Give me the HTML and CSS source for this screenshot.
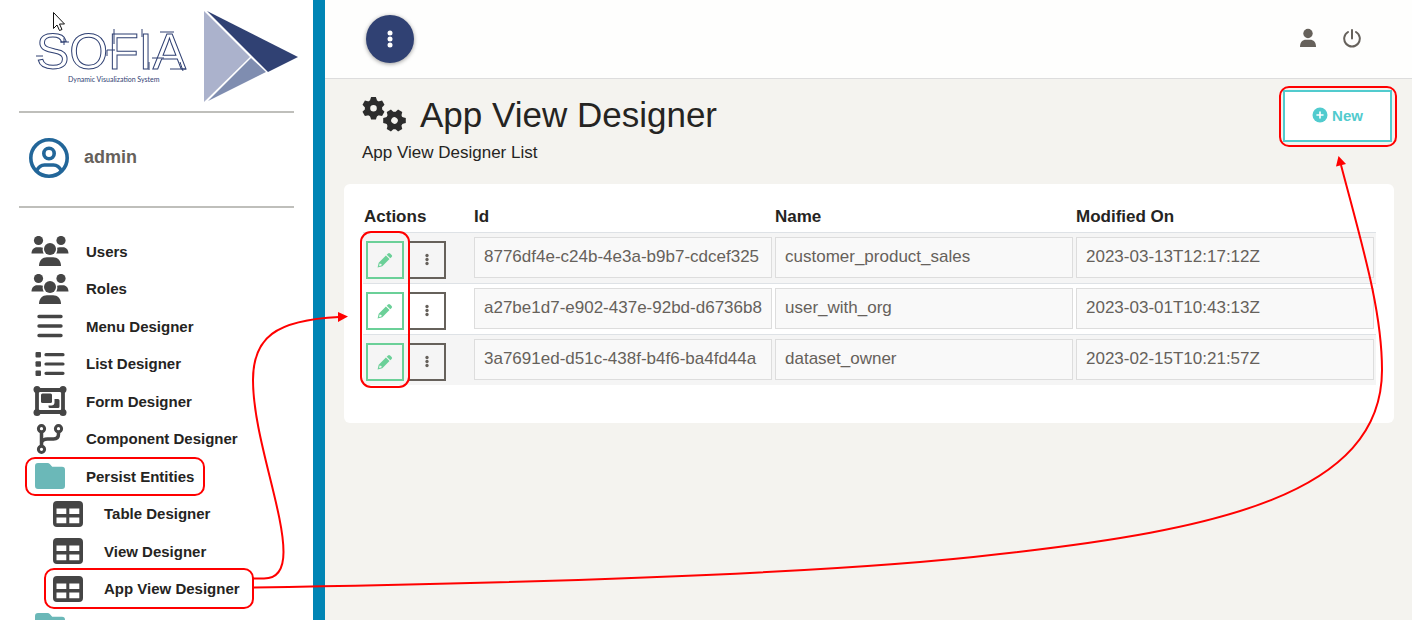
FILE: index.html
```html
<!DOCTYPE html>
<html lang="en">
<head>
<meta charset="utf-8">
<title>App View Designer</title>
<link rel="stylesheet" href="styles.css">
</head>
<body>
<svg class="sprite" aria-hidden="true">
  <symbol id="i-users" viewBox="0 0 38 30">
    <circle cx="7.500" cy="4.500" r="4.600"/><circle cx="30" cy="4.500" r="4.600"/>
    <path d="M.5 17.500C.5 13.500 3 11.200 6 11.200h3.500c.9 0 1.700.2 2.400.6-.5 2-.2 4.200.9 5.700zM37.500 17.500c0-4-2.500-6.300-5.500-6.300h-3.500c-.9 0-1.700.2-2.400.6.5 2 .2 4.200-.9 5.700z"/>
    <circle cx="19" cy="13" r="6"/>
    <path d="M8 30c0-5.500 3.500-8.800 8-8.800h6c4.500 0 8 3.300 8 8.800z"/>
  </symbol>
  <symbol id="i-table" viewBox="0 0 30 26">
    <path fill-rule="evenodd" d="M4 0h22a4 4 0 0 1 4 4v18a4 4 0 0 1-4 4H4a4 4 0 0 1-4-4V4a4 4 0 0 1 4-4zM3.500 7.500v5.500h9.800V7.500zM16.300 7.500v5.500h10V7.500zM3.500 16.500v5.800h9.800v-5.800zM16.300 16.500v5.800h10v-5.800z"/>
  </symbol>
  <symbol id="i-folder" viewBox="0 0 30 26">
    <path d="M3 0h9.500c1 0 1.700.4 2.300 1.100l2.400 2.700H27a3 3 0 0 1 3 3V23a3 3 0 0 1-3 3H3a3 3 0 0 1-3-3V3a3 3 0 0 1 3-3z"/>
  </symbol>
  <symbol id="i-dots" viewBox="0 0 6 18">
    <circle cx="3" cy="3" r="2.500"/><circle cx="3" cy="9" r="2.500"/><circle cx="3" cy="15" r="2.500"/>
  </symbol>
  <symbol id="i-pencil" viewBox="0 0 16 16">
    <path d="M11 1.400a1.500 1.500 0 0 1 2.100 0l1.500 1.500a1.500 1.500 0 0 1 0 2.100l-1.300 1.300L9.700 2.700z"/>
    <path fill-rule="evenodd" d="M8.900 3.500l3.600 3.600-7.200 7.200L.6 15.400l1.100-4.700zM2.600 11.600l-.5 2.300 2.300-.5.2-1.400-1.300-.2z"/>
  </symbol>
</svg>
<div class="app">
  <aside class="sidebar">
    <svg class="logo" width="275" height="111" viewBox="19 0 275 111" role="img" aria-label="Sofia">
      <text class="logo-name" x="36" y="69">SOFIA</text>
      <path class="logo-lines" d="M36 56h7M60 42h9M64 38v7M114 29v15M107 50h8M107 50v6M142 29v8M149 70v-8M160 32h14M152 58h12M170 69h16M180 62l3 9"/>
      <text class="logo-tag" x="68" y="82">Dynamic Visualization System</text>
      <path fill="#abb2cc" d="M204 11v91l46-45z"/>
      <path fill="#304173" d="M207 11l91 46-30 15z"/>
      <path fill="#7f8db0" d="M251 58l15 14-58 29z"/>
    </svg>
    <div class="profile">
      <svg width="40" height="40" viewBox="0 0 40 40" fill="none" stroke="#226699" stroke-width="3.600">
        <circle cx="20" cy="20" r="18.200"/><circle cx="20" cy="15.500" r="5.200"/>
        <path d="M7.500 33c2-4 4.500-6 8-6h9c3.500 0 6 2 8 6"/>
      </svg>
      <span>admin</span>
    </div>
    <nav>
      <ul class="menu">
        <li><a href="#"><svg width="38" height="30"><use href="#i-users"/></svg><span>Users</span></a></li>
        <li><a href="#"><svg width="38" height="30"><use href="#i-users"/></svg><span>Roles</span></a></li>
        <li><a href="#"><svg width="38" height="24" viewBox="0 0 38 24"><path class="line" stroke-width="3.400" stroke-linecap="round" d="M8 2.500h22M8 12h22M8 21.500h22"/></svg><span>Menu Designer</span></a></li>
        <li><a href="#"><svg width="38" height="26" viewBox="0 0 38 26"><path class="line" stroke-width="3.200" stroke-linecap="round" d="M15 3.700h17M15 13h17M15 22.300h17"/><rect x="4.500" y="1" width="5.500" height="5.500" rx="1"/><rect x="4.500" y="10.300" width="5.500" height="5.500" rx="1"/><rect x="4.500" y="19.600" width="5.500" height="5.500" rx="1"/></svg><span>List Designer</span></a></li>
        <li><a href="#"><svg width="38" height="30" viewBox="0 0 38 30"><path class="line" stroke-width="3.800" d="M6 4h26v22H6z"/><circle cx="6" cy="3.500" r="3.500"/><circle cx="32" cy="3.500" r="3.500"/><circle cx="6" cy="26.500" r="3.500"/><circle cx="32" cy="26.500" r="3.500"/><rect x="10" y="7.500" width="11" height="9.500" rx="1.500"/><path d="M23.500 13H27a1.500 1.500 0 0 1 1.500 1.500v6A1.500 1.500 0 0 1 27 22h-8a1.500 1.500 0 0 1-1.500-1.500v-1h3c1.700 0 3-1.300 3-3z"/></svg><span>Form Designer</span></a></li>
        <li><a href="#"><svg width="38" height="30" viewBox="0 0 38 30"><g class="line" stroke-width="3"><circle cx="10.500" cy="4.700" r="3.100"/><circle cx="27.500" cy="4.700" r="3.100"/><circle cx="10.500" cy="25.300" r="3.100"/></g><path class="line" stroke-width="3.500" d="M10.500 8v14M27.500 8v2c0 3-1.800 5-5 5h-6c-3 0-6 1.500-6 4.500"/></svg><span>Component Designer</span></a></li>
        <li><a href="#"><svg class="folder" width="38" height="26"><use href="#i-folder"/></svg><span>Persist Entities</span></a></li>
        <li class="sub"><a href="#"><svg width="38" height="26"><use href="#i-table"/></svg><span>Table Designer</span></a></li>
        <li class="sub"><a href="#"><svg width="38" height="26"><use href="#i-table"/></svg><span>View Designer</span></a></li>
        <li class="sub"><a href="#"><svg width="38" height="26"><use href="#i-table"/></svg><span>App View Designer</span></a></li>
        <li><a href="#" aria-label="Folder"><svg class="folder" width="38" height="26"><use href="#i-folder"/></svg></a></li>
      </ul>
    </nav>
  </aside>
  <div class="page">
    <header class="topbar">
      <button class="round" type="button" aria-label="Menu"><svg width="6" height="18"><use href="#i-dots"/></svg></button>
      <div class="tools">
        <button type="button" aria-label="Account"><svg width="18" height="20" viewBox="0 0 18 20" fill="#66615b"><circle cx="9" cy="5.500" r="4.700"/><path d="M1 19c0-5 2.500-7.300 6-7.300h4c3.500 0 6 2.300 6 7.300z"/></svg></button>
        <button type="button" aria-label="Log out"><svg width="18" height="20" viewBox="0 0 18 20" fill="none" stroke="#66615b" stroke-width="2" stroke-linecap="round"><path d="M9 2v8.500M5 4a7.800 7.800 0 1 0 8 0"/></svg></button>
      </div>
    </header>
    <main>
      <div class="heading">
        <div>
          <h1>
            <svg width="44" height="36" viewBox="362 97 44 36" fill="#2c2c2c">
              <defs>
                <path id="tooth" d="M-3.600-7.500l1.200-3.800h4.800l1.200 3.800z"/>
                <g id="gear">
                  <circle r="6" fill="none" stroke="#2c2c2c" stroke-width="5.400"/>
                  <use href="#tooth"/><use href="#tooth" transform="rotate(60)"/><use href="#tooth" transform="rotate(120)"/><use href="#tooth" transform="rotate(180)"/><use href="#tooth" transform="rotate(240)"/><use href="#tooth" transform="rotate(300)"/>
                </g>
              </defs>
              <use href="#gear" transform="translate(373.500 108.300)"/>
              <use href="#gear" transform="translate(394.500 120.500) rotate(30)"/>
            </svg>
            <span>App View Designer</span>
          </h1>
          <p>App View Designer List</p>
        </div>
        <button class="new" type="button"><svg width="16" height="16" viewBox="0 0 16 16"><circle cx="8" cy="8" r="7.500" fill="#51cbce"/><path stroke="#fff" stroke-width="1.600" stroke-linecap="round" d="M8 5v6M5 8h6"/></svg>New</button>
      </div>
      <section class="card">
        <table>
          <thead><tr><th class="actions" scope="col">Actions</th><th scope="col">Id</th><th scope="col">Name</th><th scope="col">Modified On</th></tr></thead>
          <tbody>
            <tr>
              <td><div class="buttons"><button class="edit" type="button" aria-label="Edit"><svg width="16" height="16"><use href="#i-pencil"/></svg></button><button type="button" aria-label="More"><svg width="4" height="13"><use href="#i-dots"/></svg></button></div></td>
              <td><input type="text" aria-label="Id" readonly value="8776df4e-c24b-4e3a-b9b7-cdcef325"></td>
              <td><input type="text" aria-label="Name" readonly value="customer_product_sales"></td>
              <td><input type="text" aria-label="Modified On" readonly value="2023-03-13T12:17:12Z"></td>
            </tr>
            <tr>
              <td><div class="buttons"><button class="edit" type="button" aria-label="Edit"><svg width="16" height="16"><use href="#i-pencil"/></svg></button><button type="button" aria-label="More"><svg width="4" height="13"><use href="#i-dots"/></svg></button></div></td>
              <td><input type="text" aria-label="Id" readonly value="a27be1d7-e902-437e-92bd-d6736b8"></td>
              <td><input type="text" aria-label="Name" readonly value="user_with_org"></td>
              <td><input type="text" aria-label="Modified On" readonly value="2023-03-01T10:43:13Z"></td>
            </tr>
            <tr>
              <td><div class="buttons"><button class="edit" type="button" aria-label="Edit"><svg width="16" height="16"><use href="#i-pencil"/></svg></button><button type="button" aria-label="More"><svg width="4" height="13"><use href="#i-dots"/></svg></button></div></td>
              <td><input type="text" aria-label="Id" readonly value="3a7691ed-d51c-438f-b4f6-ba4fd44a"></td>
              <td><input type="text" aria-label="Name" readonly value="dataset_owner"></td>
              <td><input type="text" aria-label="Modified On" readonly value="2023-02-15T10:21:57Z"></td>
            </tr>
          </tbody>
        </table>
      </section>
    </main>
  </div>
</div>
<svg class="notes" width="1412" height="620" viewBox="0 0 1412 620" aria-hidden="true">
  <g fill="none" stroke="#f00" stroke-width="2">
    <rect x="26" y="458" width="178" height="37" rx="9"/>
    <rect x="45" y="569" width="208" height="39" rx="9"/>
    <rect x="361" y="232" width="48" height="155" rx="10"/>
    <rect x="1280" y="87" width="116" height="59" rx="9"/>
    <path d="M253 578.500H264C277 578.500 283.500 570 283.500 552C283.500 510 253 435 253 380C253 338 275 320 339 317"/>
    <path d="M253 587.500C600 582 850 572 1000 554C1215 530 1382 495 1382 370C1382 310 1362 245 1341 165"/>
  </g>
  <path fill="#f00" d="M348 316.500l-10-4.500v10zM1338.500 156l-2.500 10.500 10-2.500z"/>
  <path fill="#fff" stroke="#111" d="M53.500 12.500v16l3.500-3.500 2.500 5.500 2.500-1-2.500-5.500h5z"/>
</svg>
</body>
</html>
```
FILE: styles.css
```css
* {
  box-sizing: border-box;
}

body {
  margin: 0;
  overflow: hidden;
  font-family: "Liberation Sans", Arial, sans-serif;
  font-size: 17px;
  color: #252422;
  background: #f4f3ef;
}

button {
  display: flex;
  align-items: center;
  justify-content: center;
  padding: 0;
  border: 0;
  background: none;
  font: inherit;
  cursor: pointer;
}

.sprite {
  display: none;
}

.app {
  display: flex;
  height: 100vh;
}

.sidebar {
  flex: 0 0 325px;
  padding: 0 19px;
  overflow: hidden;
  border-right: 12px solid #0085b5;
  background: #fff;
}

.logo {
  display: block;
  overflow: visible;
}

.logo-name {
  font-size: 50px;
  fill: #fff;
  stroke: #304173;
  stroke-width: 1px;
}

.logo-lines {
  fill: none;
  stroke: #304173;
  stroke-width: 1px;
}

.logo-tag {
  font-family: Lato, sans-serif;
  font-size: 7px;
  fill: #304173;
}

.profile {
  display: flex;
  align-items: center;
  gap: 15px;
  height: 97px;
  padding-left: 10px;
  padding-bottom: 4px;
  border: solid #bfbfbb;
  border-width: 2px 0;
  font-size: 18px;
  font-weight: bold;
  color: #66615b;
}

.menu {
  margin: 0;
  padding: 24px 0 0 12px;
  list-style: none;
}

.menu a {
  display: flex;
  align-items: center;
  gap: 17px;
  height: 37px;
  font-size: 15px;
  font-weight: bold;
  color: #252422;
  text-decoration: none;
  white-space: nowrap;
}

.menu li:nth-child(odd) a {
  height: 38px;
}

.menu svg {
  flex: none;
  fill: #454545;
}

.menu .line {
  fill: none;
  stroke: #454545;
}

.menu .folder {
  fill: #6bb8b8;
}

.menu .sub {
  padding-left: 18px;
}

.page {
  flex: 1;
  min-width: 0;
}

.topbar {
  display: flex;
  align-items: center;
  justify-content: space-between;
  height: 79px;
  padding: 0 51px 0 41px;
  border-bottom: 1px solid #ddd;
  background: #fefefd;
}

.round {
  width: 48px;
  height: 48px;
  border-radius: 50%;
  background: #304173;
  fill: #fff;
  box-shadow: 0 1px 4px rgba(0, 0, 0, 0.4);
}

.tools {
  display: flex;
  gap: 26px;
  padding-bottom: 2px;
}

.heading {
  display: flex;
  align-items: flex-start;
  justify-content: space-between;
  padding: 11px 20px 0 37px;
  height: 105px;
}

h1 {
  display: flex;
  align-items: center;
  gap: 14px;
  margin: 0;
  font-size: 35px;
  font-weight: normal;
  line-height: 50px;
}

.heading p {
  margin: 0;
  line-height: 26px;
}

.new {
  gap: 4px;
  width: 109px;
  height: 52px;
  padding-bottom: 2px;
  border: 2px solid #51cbce;
  background: #fff;
  font-size: 15px;
  font-weight: bold;
  color: #51cbce;
}

.card {
  margin: 0 18px 0 19px;
  padding: 16px 18px 38px 19px;
  border-radius: 6px;
  background: #fff;
}

table {
  width: 100%;
  table-layout: fixed;
  border-collapse: collapse;
}

th {
  height: 32px;
  padding: 2px 1px 0;
  text-align: left;
}

.actions {
  width: 110px;
}

td {
  height: 51px;
  padding: 4px 2px 4px 1px;
  border-top: 1px solid #dee2e6;
  vertical-align: top;
}

tbody tr:nth-child(odd) {
  background: #f5f5f5;
}

td input {
  display: block;
  width: 100%;
  height: 41px;
  padding: 0 9px;
  border: 1px solid #ddd;
  background: #f9f9f9;
  font: inherit;
  color: #66615b;
}

.buttons {
  display: flex;
  gap: 4px;
  padding: 4px 0 0 2px;
}

.buttons button {
  width: 38px;
  height: 38px;
  border: 2px solid #66615b;
  fill: #66615b;
}

.buttons .edit {
  border-color: #6bd098;
  fill: #6bd098;
}

.notes {
  position: absolute;
  top: 0;
  left: 0;
  pointer-events: none;
}
```
